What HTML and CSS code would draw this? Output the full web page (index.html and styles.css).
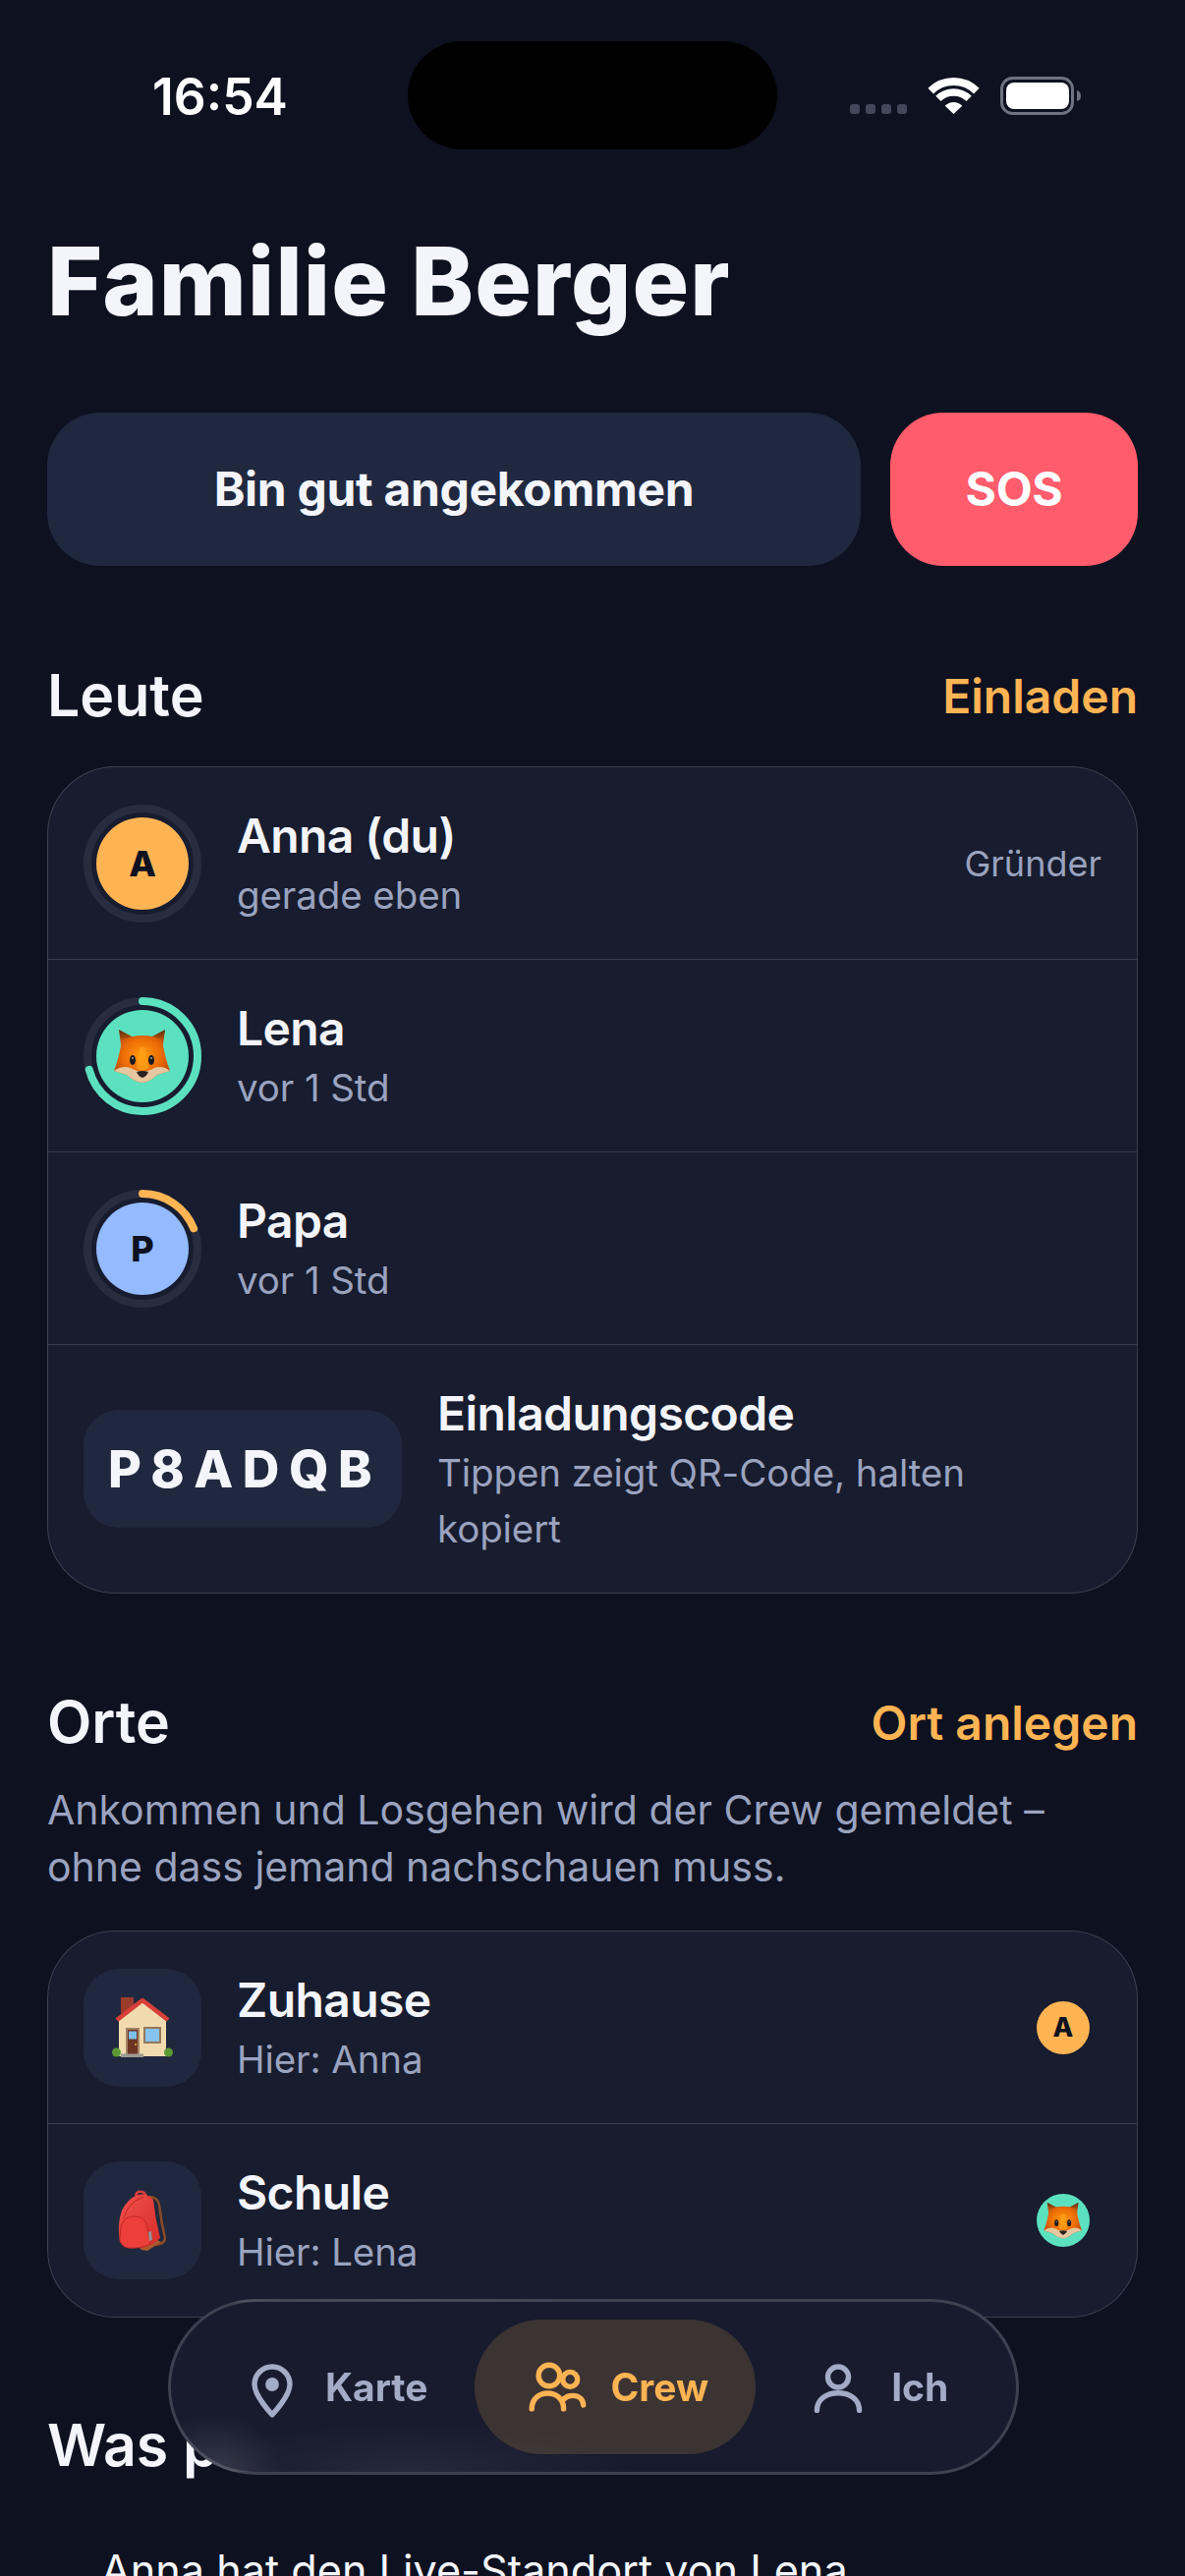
FILE: index.html
```html
<!DOCTYPE html>
<html lang="de">
<head>
<meta charset="utf-8">
<title>Familie Berger</title>
<link rel="stylesheet" href="styles.css">
</head>
<body>
<svg class="defs" width="0" height="0" aria-hidden="true">
  <defs>
    <radialGradient id="foxFur" cx="50%" cy="42%" r="60%">
      <stop offset="0" stop-color="#ff9a0a"/>
      <stop offset=".55" stop-color="#ee6f06"/>
      <stop offset="1" stop-color="#b84508"/>
    </radialGradient>
    <linearGradient id="foxEar" x1="0" y1="0" x2="0" y2="1">
      <stop offset="0" stop-color="#5a2a10"/>
      <stop offset=".6" stop-color="#d96208"/>
    </linearGradient>
    <linearGradient id="bagRed" x1="0" y1="0" x2="1" y2="1">
      <stop offset="0" stop-color="#f2504a"/>
      <stop offset="1" stop-color="#d62c2a"/>
    </linearGradient>
    <symbol id="fox" viewBox="0 0 58 56">
      <path fill="url(#foxEar)" d="M5 1 24 11 8 24Z"/>
      <path fill="url(#foxEar)" d="M52 1 33 11 49 24Z"/>
      <path fill="url(#foxFur)" d="M8 12Q17 7 29 7 41 7 49 12 52 30 57 43L44 47Q35 55 29 55 22 55 13 47L0 43Q5 30 8 12Z"/>
      <path fill="#ffa21a" opacity=".75" d="M26 20Q29 17 32 20L35 40Q29 45 23 40Z"/>
      <path fill="#e6c7a0" d="M0 43Q8 37 17 40 24 44 29 43 34 44 41 40 50 37 57 43L44 47Q35 55 29 55 22 55 13 47Z"/>
      <ellipse cx="19" cy="32" rx="3" ry="5" fill="#1b1a20"/>
      <ellipse cx="38" cy="32" rx="3" ry="5" fill="#1b1a20"/>
      <circle cx="19" cy="30" r="1" fill="#9aa"/>
      <circle cx="38" cy="30" r="1" fill="#9aa"/>
      <path fill="#2b211f" d="M23 44Q29 42 35 44 33 49 29 50 25 49 23 44Z"/>
    </symbol>
    <symbol id="house" viewBox="0 0 62 62">
      <rect x="9" y="0" width="13" height="16" fill="#9c3a2c"/>
      <path fill="#f1dbae" d="M7 24 31 4 55 24V60H7Z"/>
      <path fill="none" stroke="#d73f38" stroke-width="4.5" stroke-linejoin="round" d="M5 23 31 3 57 23"/>
      <rect x="14" y="31" width="14" height="27" fill="#a08364"/>
      <rect x="16" y="33" width="10" height="25" fill="#6e3423"/>
      <rect x="17" y="34.500" width="8" height="8" fill="#7fbfe8"/>
      <circle cx="24" cy="48" r="1" fill="#f0b93a"/>
      <rect x="32" y="30" width="18" height="17" fill="#94795c"/>
      <rect x="34" y="32" width="14" height="13" fill="#86c3ee"/>
      <rect x="9" y="57.500" width="23" height="3.500" fill="#9c9a90"/>
      <circle cx="4.500" cy="56" r="4.500" fill="#5b9a33"/>
      <circle cx="57.500" cy="56" r="4.500" fill="#5b9a33"/>
    </symbol>
    <symbol id="bag" viewBox="0 0 50 64">
      <path fill="none" stroke="#8a4a26" stroke-width="2.500" d="M32 8Q40 8 42 16 44 34 48 50 48 56 38 57"/>
      <path fill="#a85a2c" d="M18 56 40 52 44 54 30 63 24 62Z"/>
      <path fill="none" stroke="#d8403a" stroke-width="2.500" d="M18 7Q19 2 24 3 29 4 28 8"/>
      <path fill="url(#bagRed)" d="M20 6Q30 4 36 11 38 30 43 50 35 58 24 60 6 60 2 54 -1 36 4 22 10 10 20 6Z"/>
      <path fill="none" stroke="#b82624" stroke-width="1" d="M6 30Q10 14 26 8"/>
      <path fill="#ec3f3a" stroke="#c02624" stroke-width="1" d="M3 38Q6 28 16 28 27 28 29 36 32 48 33 56 24 61 10 60 2 58 2 50Z"/>
      <path fill="#8f9499" d="M31 44 34 43 35 52 32 53Z"/>
    </symbol>
  </defs>
</svg>

<div class="screen">
  <header class="status">
    <span class="clock">16:54</span>
    <svg class="status-icons" width="236" height="40" viewBox="0 0 236 40">
      <g fill="#44475a">
        <rect x="0" y="28" width="10" height="10" rx="3"/>
        <rect x="16" y="28" width="10" height="10" rx="3"/>
        <rect x="32" y="28" width="10" height="10" rx="3"/>
        <rect x="48" y="28" width="10" height="10" rx="3"/>
      </g>
      <g fill="none" stroke="#fff">
        <path stroke-width="8" d="M82.200 14.700A33 33 0 0 1 128.800 14.700"/>
        <path stroke-width="7.500" d="M89.900 22.400A22 22 0 0 1 121.100 22.400"/>
      </g>
      <path fill="#fff" d="M105.500 38 96.700 29.800A12 12 0 0 1 114.300 29.800Z"/>
      <rect x="154.500" y="1.500" width="72" height="36" rx="11" fill="none" stroke="#6f7280" stroke-width="3"/>
      <rect x="159" y="6" width="64" height="27" rx="8" fill="#fff"/>
      <path fill="#6f7280" d="M231 14Q235 15 235 20 235 24 231 25Z"/>
    </svg>
  </header>
  <div class="island"></div>

  <main class="content">
    <h1 class="title">Familie Berger</h1>

    <div class="actions">
      <button class="btn btn-main">Bin gut angekommen</button>
      <button class="btn btn-sos">SOS</button>
    </div>

    <section class="section">
      <div class="section-head">
        <h2>Leute</h2>
        <a class="link">Einladen</a>
      </div>
      <div class="card">
        <div class="row">
          <div class="avatar-ring">
            <svg width="120" height="120" viewBox="0 0 120 120"><circle class="track" cx="60" cy="60" r="56"/></svg>
            <span class="avatar a-orange">A</span>
          </div>
          <div class="row-text"><div class="name">Anna (du)</div><div class="sub">gerade eben</div></div>
          <span class="role">Gründer</span>
        </div>
        <div class="row">
          <div class="avatar-ring">
            <svg width="120" height="120" viewBox="0 0 120 120"><circle class="track" cx="60" cy="60" r="56"/><circle class="arc arc-teal" cx="60" cy="60" r="56" pathLength="100" stroke-dasharray="71 100"/></svg>
            <span class="avatar a-teal"><svg class="fox-lg"><use href="#fox"/></svg></span>
          </div>
          <div class="row-text"><div class="name">Lena</div><div class="sub">vor 1 Std</div></div>
        </div>
        <div class="row">
          <div class="avatar-ring">
            <svg width="120" height="120" viewBox="0 0 120 120"><circle class="track" cx="60" cy="60" r="56"/><circle class="arc arc-orange" cx="60" cy="60" r="56" pathLength="100" stroke-dasharray="19 100"/></svg>
            <span class="avatar a-blue">P</span>
          </div>
          <div class="row-text"><div class="name">Papa</div><div class="sub">vor 1 Std</div></div>
        </div>
        <div class="row row-invite">
          <div class="code">P8ADQB</div>
          <div class="row-text"><div class="name">Einladungscode</div><div class="sub sub-wrap">Tippen zeigt QR-Code, halten kopiert</div></div>
        </div>
      </div>
    </section>

    <section class="section section-places">
      <div class="section-head">
        <h2>Orte</h2>
        <a class="link">Ort anlegen</a>
      </div>
      <p class="desc">Ankommen und Losgehen wird der Crew gemeldet – ohne dass jemand nachschauen muss.</p>
      <div class="card">
        <div class="row">
          <div class="place-icon"><svg class="em-house"><use href="#house"/></svg></div>
          <div class="row-text"><div class="name">Zuhause</div><div class="sub">Hier: Anna</div></div>
          <span class="chip a-orange">A</span>
        </div>
        <div class="row">
          <div class="place-icon"><svg class="em-bag"><use href="#bag"/></svg></div>
          <div class="row-text"><div class="name">Schule</div><div class="sub">Hier: Lena</div></div>
          <span class="chip a-teal"><svg class="fox-sm"><use href="#fox"/></svg></span>
        </div>
      </div>
    </section>

    <section class="section section-feed">
      <h2>Was passiert ist</h2>
      <p class="feed-item">Anna hat den Live-Standort von Lena</p>
    </section>
  </main>

  <nav class="tabbar">
    <a class="tab">
      <svg class="tab-icon" viewBox="0 0 24 24"><path d="M12 21.300s-6-6.300-6-10.300a6 6 0 0 1 12 0c0 4-6 10.300-6 10.300z"/><circle class="dot" cx="12" cy="11" r="2.300"/></svg>
      <span>Karte</span>
    </a>
    <a class="tab tab-active">
      <svg class="tab-icon" viewBox="0 0 24 24"><circle cx="9.300" cy="8" r="3.600"/><circle cx="16.400" cy="9.300" r="2.500"/><path d="M3.400 19.300C3.400 15.800 6 14 8.800 14c2.800 0 5.400 1.800 5.400 5.300"/><path d="M14.200 16c.9-.9 2-1.200 3.100-1.200 2.100 0 3.500 1.300 3.600 3.200"/></svg>
      <span>Crew</span>
    </a>
    <a class="tab">
      <svg class="tab-icon" viewBox="0 0 24 24"><circle cx="12" cy="8.500" r="3.500"/><path d="M4.800 19.800C4.800 16 8 13.900 12 13.900s7.200 2.100 7.200 5.900"/></svg>
      <span>Ich</span>
    </a>
  </nav>
</div>
</body>
</html>
```

FILE: styles.css
```css
* { box-sizing: border-box; }
html, body { margin: 0; padding: 0; background: #0d1120; }
body { font-family: Inter, "Noto Sans", sans-serif; color: #f3f5fb; }
.defs { position: absolute; }
.screen { position: relative; width: 1206px; height: 2622px; overflow: hidden; background: #0d1120; }

.status { display: flex; align-items: center; justify-content: space-between; height: 196px; padding: 0 105px 0 155px; }
.clock { font-size: 51.5px; font-weight: 600; color: #fff; }
.status-icons { display: block; }
.island { position: absolute; left: 415px; top: 42px; width: 376px; height: 110px; border-radius: 55px; background: #000; }

.content { padding: 0 48px; }
.title { margin: 34px 0 78px; font-size: 96px; line-height: 112px; font-weight: 800; letter-spacing: 1.2px; color: #f3f5fb; }

.actions { display: flex; gap: 30px; }
.btn { height: 156px; border: 0; border-radius: 54px; font: 700 48px/1 Inter, sans-serif; letter-spacing: -.3px; color: #f3f5fb; }
.btn-main { flex: 1; background: #20283f; }
.btn-sos { width: 252px; background: #ff5c6c; color: #fff; }

.section { margin-top: 99px; }
.section-head { display: flex; justify-content: space-between; align-items: center; height: 66px; margin-bottom: 39px; }
h2 { margin: 0; font-size: 59px; line-height: 66px; font-weight: 600; color: #f3f5fb; }
.link { font-size: 48px; font-weight: 600; color: #ffb454; }

.card { border: 1px solid rgba(255, 255, 255, .16); border-radius: 69px; background: #171c2e; overflow: hidden; }
.row { display: flex; align-items: center; gap: 36px; height: 196px; padding: 0 36px; border-bottom: 1px solid rgba(255, 255, 255, .14); }
.row:last-child { border-bottom: 0; }
.row-invite { height: 252px; }
.row-text { flex: 1; min-width: 0; padding-top: 2px; }
.name { font-size: 48px; line-height: 62px; font-weight: 600; letter-spacing: -.6px; color: #f3f5fb; }
.sub { margin-top: 1px; font-size: 38.5px; line-height: 57px; letter-spacing: -.1px; color: #9aa3bf; }
.sub-wrap { max-width: 600px; }
.role { font-size: 36px; color: #9aa3bf; }

.avatar-ring { position: relative; flex: none; display: flex; align-items: center; justify-content: center; width: 120px; height: 120px; }
.avatar-ring > svg { position: absolute; inset: 0; transform: rotate(-90deg); }
.track { fill: none; stroke: #272d3f; stroke-width: 8; }
.arc { fill: none; stroke-width: 8; stroke-linecap: round; }
.arc-teal { stroke: #5ce1c0; }
.arc-orange { stroke: #ffb454; }
.avatar { display: flex; align-items: center; justify-content: center; width: 94px; height: 94px; border-radius: 50%; font-size: 36px; font-weight: 800; color: #0d1120; }
.a-orange { background: #ffb454; }
.a-teal { background: #5ce1c0; }
.a-blue { background: #94baff; }
.fox-lg { width: 58px; height: 56px; }
.fox-sm { width: 40px; height: 38px; }

.code { flex: none; display: flex; align-items: center; justify-content: center; width: 324px; height: 120px; padding-left: 4px; border-radius: 36px; background: #20283f; font-size: 52px; font-weight: 800; letter-spacing: 9.5px; color: #f3f5fb; }

.section-places { margin-top: 98px; }
.section-places .section-head { margin-bottom: 27px; }
.desc { margin: 0 0 36px; font-size: 41px; line-height: 58px; color: #9aa3bf; }
.place-icon { flex: none; display: flex; align-items: center; justify-content: center; width: 120px; height: 120px; border-radius: 36px; background: #20283f; }
.em-house { width: 62px; height: 62px; }
.em-bag { width: 50px; height: 64px; }
.chip { flex: none; display: flex; align-items: center; justify-content: center; width: 54px; height: 54px; margin-right: 12px; border-radius: 50%; font-size: 27px; font-weight: 800; color: #0d1120; }

.section-feed { margin-top: 97px; }
.feed-item { margin: 66px 0 0 55px; font-size: 43.2px; line-height: 57px; color: #f3f5fb; }

.tabbar { position: fixed; left: 171px; top: 2340px; display: flex; width: 866px; height: 179px; padding: 18px 18px 18px 19px; border: 3px solid rgba(255, 255, 255, .17); border-radius: 90px; background: radial-gradient(ellipse 70px 60px at 5% 100%, rgba(255, 255, 255, .13), transparent), radial-gradient(ellipse 230px 50px at 28% 100%, rgba(255, 255, 255, .06), transparent), #171b2d; }
.tab { display: flex; align-items: center; gap: 18px; padding: 0 48px; border-radius: 69px; font-size: 39px; font-weight: 700; color: #a3abc6; }
.tab-active { background: rgba(255, 180, 84, .16); color: #ffb454; }
.tab-icon { flex: none; width: 72px; height: 72px; fill: none; stroke: currentColor; stroke-width: 1.8; stroke-linecap: round; stroke-linejoin: round; }
.tab-icon .dot { fill: currentColor; stroke: none; }
```
